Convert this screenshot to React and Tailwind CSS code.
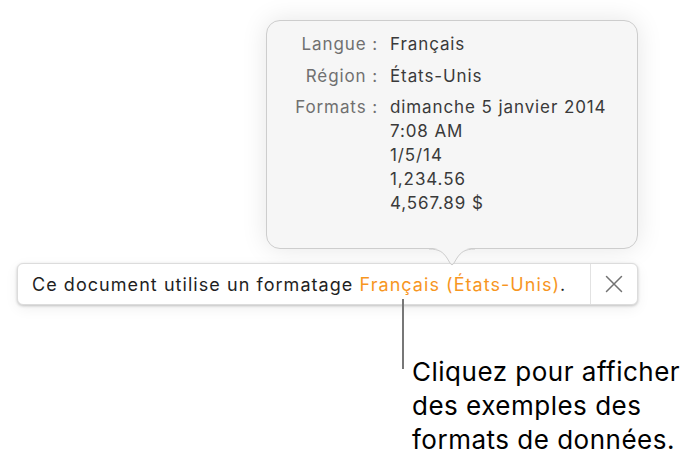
import React from 'react';

const ui = { fontFamily: 'Inter, "Noto Sans", sans-serif' };
const help = { fontFamily: 'Inter, "Liberation Sans", sans-serif' };

function Arrow() {
  return (
    <svg className="absolute left-[429px] top-[248px]" width="46" height="20" viewBox="0 0 46 20">
      <path d="M0 0 C10 0 14 3 18 9 L21 14 Q23 17.5 25 14 L28 9 C32 3 36 0 46 0 Z" fill="#f6f6f6" />
      <path d="M0 1 C10 1 14 4 18 10 L21 15 Q23 18.5 25 15 L28 10 C32 4 36 1 46 1" fill="none" stroke="#cdcdcd" strokeWidth="1" />
    </svg>
  );
}

function Row({ label, children }) {
  return (
    <>
      <div className="text-right text-[#707070]">{label}</div>
      <div className="text-[#3a3a3a]">{children}</div>
    </>
  );
}

export default function App() {
  return (
    <div className="relative w-[697px] h-[465px] overflow-hidden bg-white">
      <div
        className="ml-[266px] mt-[20px] w-[372px] h-[229px] rounded-[14px] border border-[#cdcdcd] bg-[#f6f6f6] pt-[11px] shadow-[0_0_26px_rgba(0,0,0,0.1)]"
        style={ui}
      >
        <div className="grid grid-cols-[111px_1fr] gap-x-[12px] gap-y-[7.5px] text-[17px] leading-[24px] tracking-[0.9px]">
          <Row label="Langue :">Français</Row>
          <Row label="Région :">États-Unis</Row>
          <Row label="Formats :">
            <div>dimanche 5 janvier 2014</div>
            <div>7:08 AM</div>
            <div>1/5/14</div>
            <div>1,234.56</div>
            <div>4,567.89 $</div>
          </Row>
        </div>
      </div>

      <div
        className="ml-[17px] mt-[14px] flex h-[42px] w-[621px] items-stretch rounded-[6px] border border-[#dcdcdc] bg-white shadow-[0_1px_3px_rgba(0,0,0,0.22),0_4px_14px_rgba(0,0,0,0.06)]"
        style={ui}
      >
        <div className="flex flex-1 items-center pl-[14px] text-[18px] tracking-[1.05px] text-[#1f1f1f]">
          Ce document utilise un formatage&nbsp;<span className="text-[#f7961f]">Français (États-Unis)</span>.
        </div>
        <div className="flex w-[47px] items-center justify-center border-l border-[#e2e2e2]">
          <svg width="18" height="18" viewBox="0 0 18 18">
            <path d="M1.5 1.5 L16.5 16.5 M16.5 1.5 L1.5 16.5" stroke="#737373" strokeWidth="1.5" strokeLinecap="round" />
          </svg>
        </div>
      </div>

      <Arrow />

      <div className="relative ml-[412px] mt-[50px] text-[26px] leading-[34px] tracking-[0.5px] text-black" style={help}>
        <div className="absolute left-[-10px] top-[-56px] h-[70px] w-[1.5px] bg-[#777777]" />
        <div>Cliquez pour afficher</div>
        <div>des exemples des</div>
        <div>formats de données.</div>
      </div>
    </div>
  );
}
